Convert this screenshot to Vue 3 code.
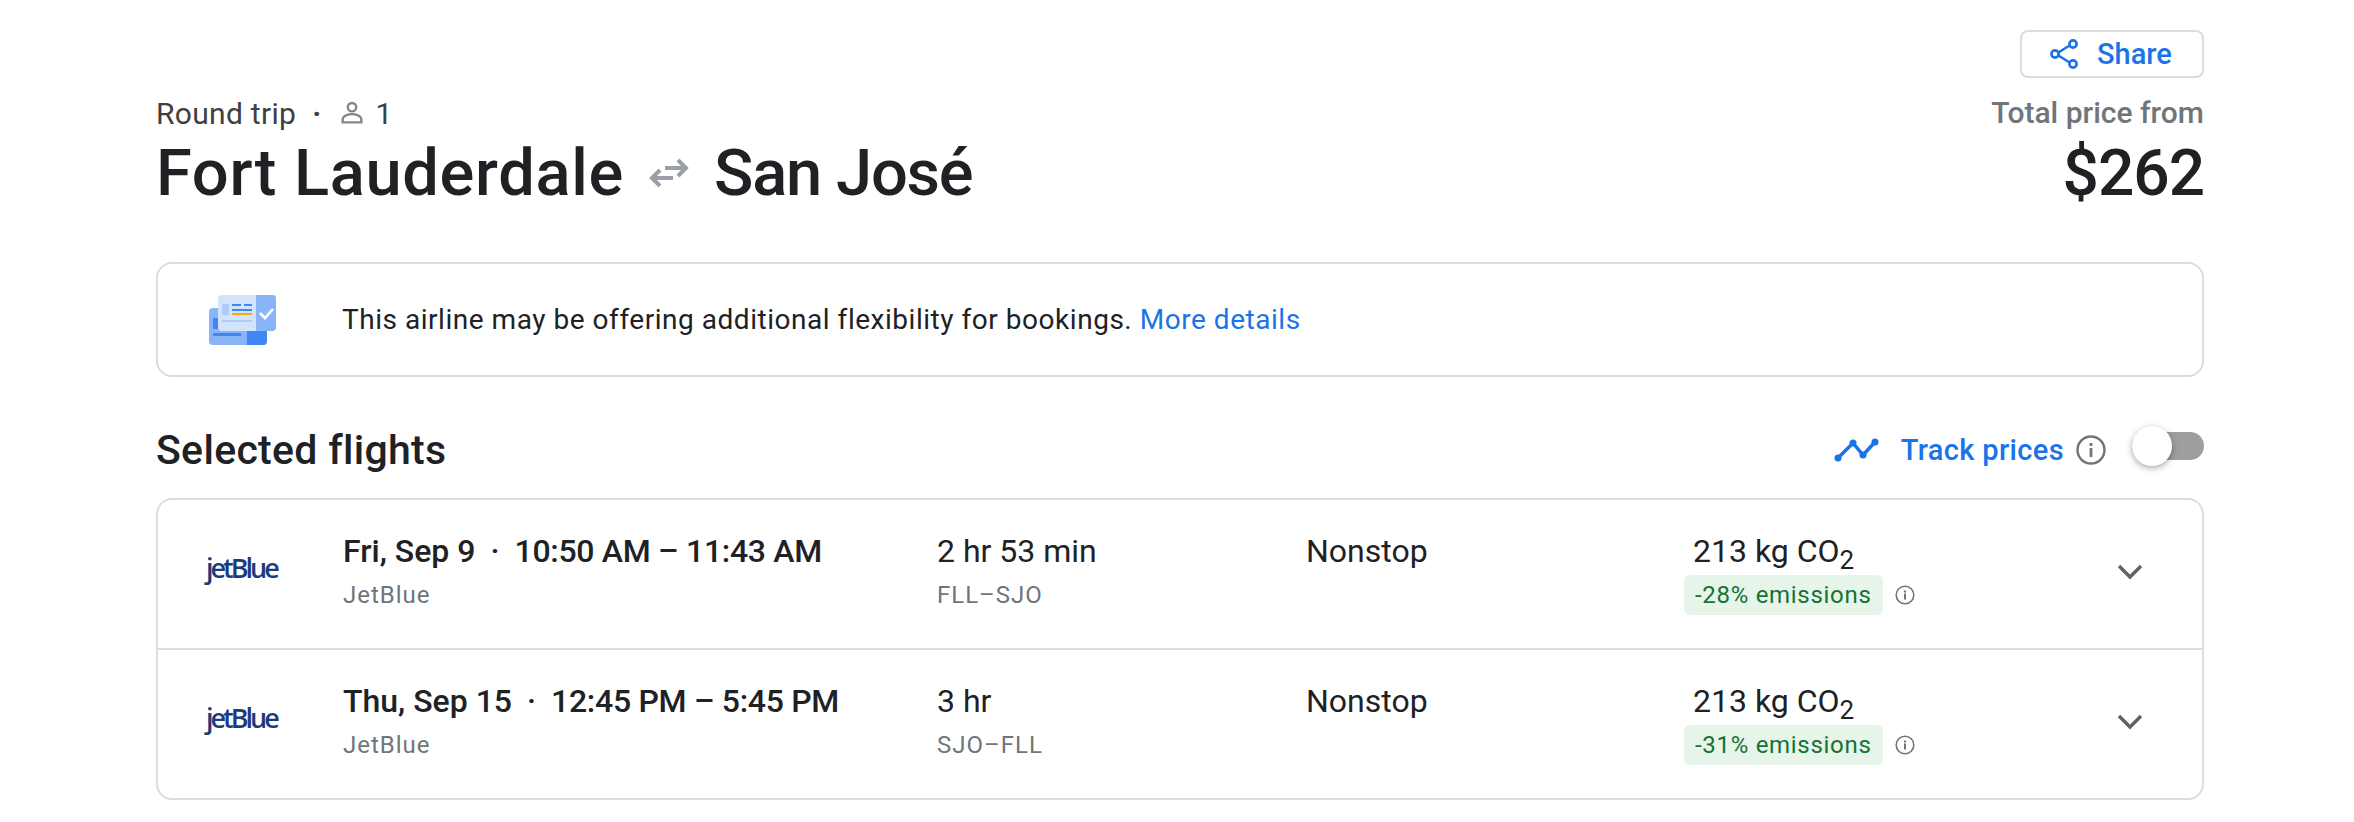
<template>
  <div class="page">
    <div class="share-row">
      <button class="share-btn">
        <svg class="share-icon" viewBox="0 0 28 30" width="28" height="30">
          <path d="M22 5 L6 15 L22 25" fill="none" stroke="#1a73e8" stroke-width="2.5" />
          <circle cx="23" cy="5" r="3.6" fill="#fff" stroke="#1a73e8" stroke-width="2.6" />
          <circle cx="5" cy="15" r="3.6" fill="#fff" stroke="#1a73e8" stroke-width="2.6" />
          <circle cx="23" cy="25" r="3.6" fill="#fff" stroke="#1a73e8" stroke-width="2.6" />
        </svg>
        <span>Share</span>
      </button>
    </div>

    <div class="header">
      <div>
        <div class="trip-meta">
          <span>Round trip</span>
          <span class="dot">·</span>
          <svg class="person" viewBox="0 0 24 24" width="28" height="28">
            <circle cx="12" cy="7" r="3.6" fill="none" stroke="#80868b" stroke-width="2" />
            <path d="M4 20 v-2.5 c0-3 4.500-4.500 8-4.500 s8 1.500 8 4.500 V20 Z" fill="none" stroke="#80868b" stroke-width="2" />
          </svg>
          <span>1</span>
        </div>
        <h1 class="route">
          <span class="origin">Fort Lauderdale</span>
          <svg class="swap" viewBox="0 0 40 32" width="40" height="32">
            <path d="M16 11 H36 M29 3 L37 11 L29 19" fill="none" stroke="#9aa0a6" stroke-width="4" />
            <path d="M24 21 H4 M11 13 L3 21 L11 29" fill="none" stroke="#9aa0a6" stroke-width="4" />
          </svg>
          <span class="dest">San José</span>
        </h1>
      </div>
      <div class="price">
        <div class="price-label">Total price from</div>
        <div class="price-value">$262</div>
      </div>
    </div>

    <div class="notice">
      <svg class="notice-art" viewBox="0 0 68 50" width="68" height="50">
        <rect x="0" y="13" width="58" height="37" rx="4" fill="#8ab4f8" />
        <path d="M38 13 H54 a4 4 0 0 1 4 4 V46 a4 4 0 0 1 -4 4 H38 Z" fill="#4285f4" />
        <rect x="4" y="23" width="5" height="11" fill="#4285f4" />
        <rect x="4" y="38" width="28" height="3" fill="#4285f4" />
        <path d="M13 0 H67 V32 a4 4 0 0 1 -4 4 H13 a4 4 0 0 1 -4 -4 V4 a4 4 0 0 1 4 -4 Z" fill="#d2e3fc" />
        <path d="M47 0 H63 a4 4 0 0 1 4 4 V32 a4 4 0 0 1 -4 4 H47 Z" fill="#8ab4f8" />
        <rect x="13" y="9" width="7" height="11" fill="#aecbfa" />
        <rect x="23" y="9" width="9" height="2" fill="#4285f4" />
        <rect x="35" y="9" width="8" height="2" fill="#4285f4" />
        <rect x="23" y="14" width="20" height="2" fill="#4285f4" />
        <rect x="23" y="18" width="20" height="2" fill="#f9ab00" />
        <rect x="13" y="25" width="30" height="2" fill="#aecbfa" />
        <path d="M51 18 L56 23 L64 14" fill="none" stroke="#fff" stroke-width="2.600" />
      </svg>
      <p>This airline may be offering additional flexibility for bookings. <a>More details</a></p>
    </div>

    <div class="section-head">
      <h2>Selected flights</h2>
      <div class="track">
        <svg class="trend" viewBox="0 0 46 26" width="46" height="26">
          <path d="M4 21 L19 6 L29 18 L41 5" fill="none" stroke="#1a73e8" stroke-width="3.500" />
          <circle cx="4" cy="21" r="3.500" fill="#1a73e8" />
          <circle cx="19" cy="6" r="3.500" fill="#1a73e8" />
          <circle cx="29" cy="18" r="3.500" fill="#1a73e8" />
          <circle cx="41" cy="5" r="3.500" fill="#1a73e8" />
        </svg>
        <span class="track-label">Track prices</span>
        <svg class="info-lg" viewBox="0 0 30 30" width="30" height="30">
          <circle cx="15" cy="15" r="13.500" fill="none" stroke="#70757a" stroke-width="2.400" />
          <rect x="13.600" y="13" width="2.800" height="9" fill="#70757a" />
          <rect x="13.600" y="8" width="2.800" height="3" fill="#70757a" />
        </svg>
        <div class="toggle"><div class="knob"></div></div>
      </div>
    </div>

    <div class="flights">
      <div v-for="flight in flights" :key="flight.code" class="flight">
        <div class="logo">jetBlue</div>
        <div>
          <div class="times">
            <span>{{ flight.date }}</span>
            <span class="sep">·</span>
            <span class="clock">{{ flight.time }}</span>
          </div>
          <div class="sub">JetBlue</div>
        </div>
        <div>
          <div class="main">{{ flight.duration }}</div>
          <div class="sub">{{ flight.code }}</div>
        </div>
        <div class="stops">
          <div class="main">Nonstop</div>
        </div>
        <div class="co2">
          <div class="main">213 kg CO<sub>2</sub></div>
          <div class="badge-row">
            <span class="badge">{{ flight.emissions }} emissions</span>
            <svg class="info-sm" viewBox="0 0 20 20" width="20" height="20">
              <circle cx="10" cy="10" r="8.800" fill="none" stroke="#70757a" stroke-width="1.600" />
              <rect x="9" y="8.500" width="2" height="6" fill="#70757a" />
              <rect x="9" y="5.500" width="2" height="2" fill="#70757a" />
            </svg>
          </div>
        </div>
        <svg class="chevron" viewBox="0 0 26 16" width="26" height="16">
          <path d="M2 2 L13 13 L24 2" fill="none" stroke="#5f6368" stroke-width="3.400" />
        </svg>
      </div>
    </div>
  </div>
</template>

<script setup>
const flights = [
  { date: 'Fri, Sep 9', time: '10:50 AM – 11:43 AM', duration: '2 hr 53 min', code: 'FLL–SJO', emissions: '-28%' },
  { date: 'Thu, Sep 15', time: '12:45 PM – 5:45 PM', duration: '3 hr', code: 'SJO–FLL', emissions: '-31%' }
]
</script>

<style>
body {
  background: #fff;
}
</style>

<style scoped>
.page {
  width: 2048px;
  margin-left: 156px;
  padding-top: 30px;
  font-family: Roboto, "Noto Sans", sans-serif;
  color: #202124;
}

.share-row {
  display: flex;
  justify-content: flex-end;
}

.share-btn {
  display: flex;
  align-items: center;
  gap: 19px;
  width: 184px;
  height: 48px;
  padding: 0 0 0 28px;
  background: #fff;
  border: 2px solid #dadce0;
  border-radius: 8px;
  color: #1a73e8;
  font-family: inherit;
  font-size: 29px;
  font-weight: 500;
}

.header {
  display: flex;
  justify-content: space-between;
  height: 184px;
  box-sizing: border-box;
  padding-top: 17px;
}

.trip-meta {
  display: flex;
  align-items: center;
  height: 36px;
  font-size: 30px;
  color: #3c4043;
  letter-spacing: 0.3px;
}

.dot {
  margin: 0 16px;
  font-weight: 700;
}

.person {
  margin-right: 10px;
}

.route {
  display: flex;
  align-items: center;
  margin: 4px 0 0;
  font-size: 65px;
  line-height: 76px;
  font-weight: 500;
}

.origin {
  letter-spacing: 0.7px;
}

.dest {
  letter-spacing: -1.2px;
}

.swap {
  margin: 0 25px;
}

.price {
  text-align: right;
}

.price-label {
  height: 36px;
  line-height: 36px;
  font-size: 30px;
  font-weight: 500;
  color: #70757a;
}

.price-value {
  margin-top: 5px;
  font-size: 64px;
  line-height: 76px;
  font-weight: 500;
  letter-spacing: -1px;
}

.notice {
  display: flex;
  align-items: center;
  height: 115px;
  box-sizing: border-box;
  padding-left: 51px;
  border: 2px solid #dadce0;
  border-radius: 16px;
}

.notice-art {
  margin-right: 65px;
}

.notice p {
  margin: 0;
  font-size: 28px;
  letter-spacing: 0.53px;
}

.notice a {
  color: #1a73e8;
}

.section-head {
  display: flex;
  align-items: center;
  justify-content: space-between;
  height: 121px;
  box-sizing: border-box;
  padding-top: 24px;
}

h2 {
  margin: 0;
  font-size: 41px;
  font-weight: 500;
  letter-spacing: 0.3px;
}

.track {
  display: flex;
  align-items: center;
}

.trend {
  margin-right: 21px;
}

.track-label {
  font-size: 29px;
  font-weight: 500;
  letter-spacing: 0.35px;
  color: #1a73e8;
}

.info-lg {
  margin: 0 26px 0 12px;
}

.toggle {
  position: relative;
  width: 72px;
  height: 28px;
  margin-top: -8px;
  background: #9e9e9e;
  border-radius: 14px;
}

.knob {
  position: absolute;
  top: -6px;
  left: 0;
  width: 40px;
  height: 40px;
  background: #fff;
  border-radius: 50%;
  box-shadow: 0 2px 6px rgba(0, 0, 0, 0.35);
}

.flights {
  border: 2px solid #dadce0;
  border-radius: 16px;
}

.flight {
  display: grid;
  grid-template-columns: 135px 594px 369px 387px 1fr 26px;
  align-items: start;
  height: 148px;
  box-sizing: border-box;
  padding: 31px 59px 0 50px;
}

.flight + .flight {
  height: 150px;
  border-top: 2px solid #dadce0;
}

.logo {
  align-self: center;
  margin: -45px 0 0 -2px;
  width: 72px;
  color: #1d3b7c;
  font-family: "Open Sans", sans-serif;
  font-size: 27px;
  font-weight: 600;
  letter-spacing: -3px;
}

.times {
  display: flex;
  font-size: 32px;
  line-height: 40px;
  font-weight: 500;
}

.sep {
  margin: 0 15px;
}

.clock {
  letter-spacing: -0.3px;
}

.main {
  font-size: 32px;
  line-height: 40px;
}

sub {
  font-size: 26px;
  line-height: 0;
}

.sub {
  margin-top: 8px;
  font-size: 24px;
  line-height: 32px;
  color: #70757a;
  letter-spacing: 1px;
}

.badge-row {
  display: flex;
  align-items: center;
  margin: 4px 0 0 -9px;
}

.badge {
  height: 40px;
  padding: 0 11px;
  line-height: 40px;
  background: #e6f4ea;
  border-radius: 6px;
  color: #137333;
  font-size: 24px;
  letter-spacing: 0.7px;
}

.info-sm {
  margin-left: 12px;
}

.chevron {
  align-self: center;
  margin-top: -35px;
}
</style>
